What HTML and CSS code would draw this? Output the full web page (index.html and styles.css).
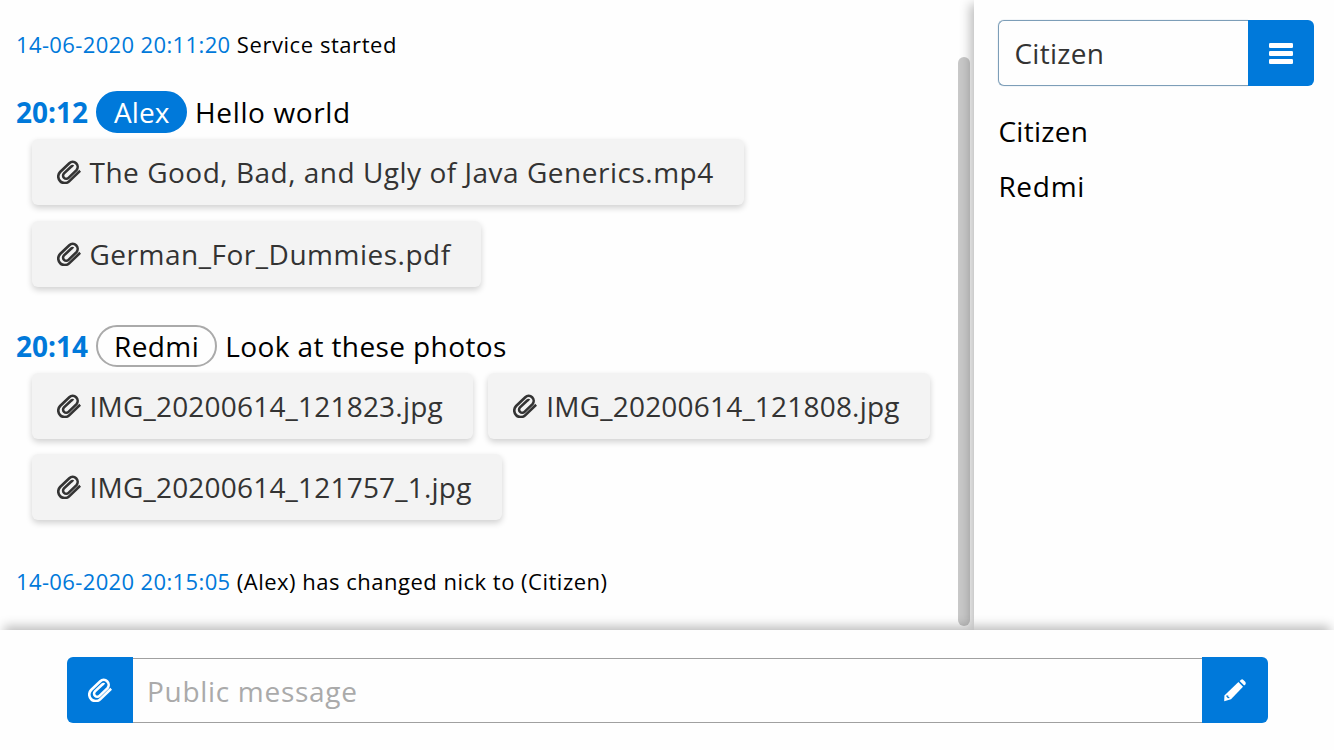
FILE: index.html
```html
<!DOCTYPE html>
<html lang="en">
<head>
<meta charset="utf-8">
<title>Chat</title>
<link rel="stylesheet" href="styles.css">
</head>
<body>
<div class="app">
  <div class="top">
    <main class="log">
      <p class="notice"><time>14-06-2020 20:11:20</time> Service started</p>
      <section class="message first">
        <div class="line"><time>20:12</time><span class="nick own">Alex</span><span class="text">Hello world</span></div>
        <div class="files">
          <a class="file"><svg class="icon"><use href="#clip"/></svg>The Good, Bad, and Ugly of Java Generics.mp4</a>
          <a class="file"><svg class="icon"><use href="#clip"/></svg>German_For_Dummies.pdf</a>
        </div>
      </section>
      <section class="message">
        <div class="line"><time>20:14</time><span class="nick">Redmi</span><span class="text long">Look at these photos</span></div>
        <div class="files photos">
          <a class="file"><svg class="icon"><use href="#clip"/></svg>IMG_20200614_121823.jpg</a>
          <a class="file"><svg class="icon"><use href="#clip"/></svg>IMG_20200614_121808.jpg</a>
          <a class="file"><svg class="icon"><use href="#clip"/></svg>IMG_20200614_121757_1.jpg</a>
        </div>
      </section>
      <p class="notice last"><time>14-06-2020 20:15:05</time> (Alex) has changed nick to (Citizen)</p>
    </main>
    <div class="track"><div class="thumb"></div></div>
    <aside class="side">
      <div class="nickbar">
        <div class="field">Citizen</div>
        <button class="btn right"><svg class="icon" viewBox="0 0 24 24"><g fill="currentColor"><rect y="2" width="24" height="5" rx="1.300"/><rect y="10" width="24" height="5" rx="1.300"/><rect y="18" width="24" height="5" rx="1.300"/></g></svg></button>
      </div>
      <ul class="users"><li class="self">Citizen</li><li>Redmi</li></ul>
    </aside>
  </div>
  <footer class="composer">
    <button class="btn left"><svg class="icon"><use href="#clip"/></svg></button>
    <div class="input">Public message</div>
    <button class="btn right"><svg class="icon" viewBox="0 0 24 24"><path d="M16.600 2.900 18 1.700q1.200-.9 2.400.200l1.800 1.800q1.200 1.300.200 2.500L21.200 7.500z" fill="currentColor"/><path d="M15.400 4.100 20 8.700 8 21.300 1.200 23.300 1.400 17.400z" fill="currentColor"/><path d="M3.300 18.200 4.700 18.100 4.900 19.500 6.300 19.700" fill="none" stroke="#0079da" stroke-width="1.200"/></svg></button>
  </footer>
</div>
<svg class="defs" width="0" height="0">
  <symbol id="clip" viewBox="0 0 24 24">
    <path d="M23.200 10.800 12.400 21.100A6.500 6.500 0 0 1 3.100 12L12.300 3.200A5 5 0 0 1 19.500 10.100L11.500 17.800A3.100 3.100 0 0 1 7 13.400L14.300 6.500Q15.400 5.600 16.300 6.500" fill="none" stroke="currentColor" stroke-width="2.600"/>
  </symbol>
</svg>
</body>
</html>
```
FILE: styles.css
```css
* { box-sizing: border-box; }
body {
  margin: 0;
  background: #fefefe;
  color: #000;
  font: 28px/42px "Open Sans", sans-serif;
  letter-spacing: .7px;
}
.defs { display: block; height: 0; }
.app { display: flex; flex-direction: column; width: 1334px; height: 750px; overflow: hidden; }
.top { display: flex; height: 630px; }
.log { width: 958px; padding: 27px 16px 0; }
.notice { margin: 0; font-size: 22px; line-height: 34px; letter-spacing: .56px; }
.notice time { letter-spacing: .37px; }
time { color: #0079da; }
.message { padding-bottom: 38px; }
.message.first { padding-top: 30px; }
.line { display: flex; gap: 8px; height: 42px; }
.line time { font-weight: 700; letter-spacing: 0; }
.text { letter-spacing: .62px; }
.long { letter-spacing: .4px; }
.nick { border: 2px solid #aaa; border-radius: 21px; padding: 0 16px; line-height: 38px; letter-spacing: .4px; }
.nick.own { padding-right: 15.5px; border-color: #0079da; background: #0079da; color: #fff; letter-spacing: .1px; }
.files { display: flex; flex-wrap: wrap; gap: 16px 15px; padding: 6px 0 0 15.5px; margin-right: -10px; letter-spacing: .51px; }
.photos { row-gap: 15.4px; letter-spacing: .2px; }
.file {
  display: flex; align-items: center; height: 66px; padding: 0 30px 0 25px;
  border-radius: 6px; background: #f3f3f3; color: #333;
  box-shadow: 0 3px 6px rgba(0, 0, 0, .18);
}
.photos .file { padding-right: 30.4px; }
.icon { width: 24px; height: 24px; flex: none; display: block; }
.file .icon { margin-right: 9px; }
.last { margin-top: 5.6px; letter-spacing: .5px; }
.track { width: 16px; padding-top: 57px; }
.thumb { width: 12px; height: 569px; border-radius: 6px; background: #c8c8c8; }
.side {
  position: relative; width: 360px; padding: 20px 20px 0 24.4px; background: #fefefe;
  box-shadow: -8px 0 10px -4px rgba(0, 0, 0, .25);
}
.nickbar { display: flex; height: 66px; }
.field {
  flex: 1; padding-left: 15px; line-height: 65px; color: #333; letter-spacing: .3px;
  border: 1.5px solid #7d9eb8; border-right: 0; border-radius: 6px 0 0 6px;
  box-shadow: 0 0 1px #86a5bd;
}
.btn {
  width: 66px; height: 66px; padding: 0; border: 0; background: #0079da; color: #fff;
  display: flex; align-items: center; justify-content: center; position: relative;
}
.btn.right { border-radius: 0 6px 6px 0; }
.btn.left { border-radius: 6px 0 0 6px; }
.users { list-style: none; margin: 18px 0 0; padding: 0; line-height: 55px; }
.users .self { letter-spacing: .3px; }
.composer {
  position: relative; display: flex; height: 120px; padding: 27.4px 66px 0 67px; background: #fefefe;
  box-shadow: 0 -8px 10px -4px rgba(0, 0, 0, .25);
}
.input {
  flex: 1; height: 65px; margin-top: .6px; padding-left: 14px; line-height: 65px; color: #aaa;
  border: solid #a0a0a0; border-width: 1px 0;
}
```
